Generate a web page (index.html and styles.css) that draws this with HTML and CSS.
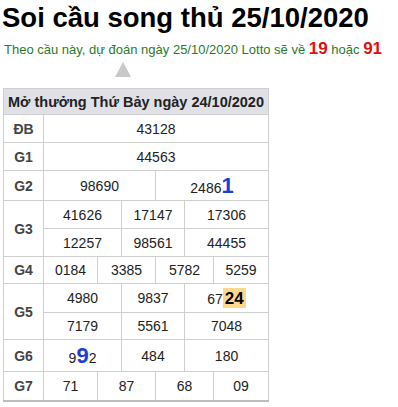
FILE: index.html
```html
<!DOCTYPE html>
<html lang="vi">
<head>
<meta charset="utf-8">
<link rel="stylesheet" href="styles.css">
</head>
<body>
<h1 class="title">Soi cầu song thủ 25/10/2020</h1>
<p class="sub">Theo cầu này, dự đoán ngày 25/10/2020 Lotto sẽ về <b class="hot">19</b> hoặc <b class="hot">91</b></p>
<div class="caret-row"><span class="caret"></span></div>
<table class="kq">
<colgroup>
<col class="c0"><col class="c1"><col class="c2"><col class="c3"><col class="c4"><col class="c5"><col class="c6">
</colgroup>
<tr class="h26"><th colspan="7" class="head">Mở thưởng Thứ Bảy ngày 24/10/2020</th></tr>
<tr class="h28"><td class="lbl">ĐB</td><td colspan="6">43128</td></tr>
<tr class="h28"><td class="lbl">G1</td><td colspan="6">44563</td></tr>
<tr class="h30"><td class="lbl">G2</td><td colspan="3">98690</td><td colspan="3">2486<b class="big">1</b></td></tr>
<tr class="h28"><td class="lbl" rowspan="2">G3</td><td colspan="2">41626</td><td colspan="2">17147</td><td colspan="2">17306</td></tr>
<tr class="h28"><td colspan="2">12257</td><td colspan="2">98561</td><td colspan="2">44455</td></tr>
<tr class="h27"><td class="lbl">G4</td><td>0184</td><td colspan="2">3385</td><td colspan="2">5782</td><td>5259</td></tr>
<tr class="h29"><td class="lbl" rowspan="2">G5</td><td colspan="2">4980</td><td colspan="2">9837</td><td colspan="2">67<b class="mark">24</b></td></tr>
<tr class="h27"><td colspan="2">7179</td><td colspan="2">5561</td><td colspan="2">7048</td></tr>
<tr class="h32"><td class="lbl">G6</td><td colspan="2">9<b class="big">9</b>2</td><td colspan="2">484</td><td colspan="2">180</td></tr>
<tr class="h29 last"><td class="lbl">G7</td><td>71</td><td colspan="2">87</td><td colspan="2">68</td><td>09</td></tr>
</table>
</body>
</html>
```
FILE: styles.css
```css
html, body { margin: 0; padding: 0; background: #fff; }
body { font-family: "Liberation Sans", Arial, sans-serif; color: #222; padding: 0 3px; }
.title { font-size: 27.5px; font-weight: bold; color: #000; margin: 0; padding-top: 3px; line-height: 30px; margin-left: -1px; }
.sub { margin: 0; padding-top: 7px; font-size: 13px; line-height: 18px; color: #2a7a2a; padding-left: 1px; }
.hot { color: #e01010; font-size: 17px; }
.caret-row { height: 29px; padding-left: 112px; padding-top: 3px; box-sizing: border-box; }
.caret { display: block; width: 0; height: 0; border-left: 8px solid transparent; border-right: 8px solid transparent; border-bottom: 15px solid #c8c8c8; }
.kq { border-collapse: collapse; table-layout: fixed; width: 265px; font-size: 14px; }
.kq td, .kq th { border: 1px solid #cfcfcf; text-align: center; padding: 0; }
.c0 { width: 40px; } .c1 { width: 54px; } .c2 { width: 24px; } .c3 { width: 34px; }
.c4 { width: 29px; } .c5 { width: 29px; } .c6 { width: 55px; }
.head { background: #dfe1e7; font-weight: bold; color: #222; font-size: 14.5px; white-space: nowrap; }
.lbl { font-weight: bold; color: #444; }
.h26 { height: 26px; } .h27 { height: 27px; } .h28 { height: 28px; } .h29 { height: 29px; }
.h30 { height: 30px; } .h32 { height: 32px; }
.last td { border-bottom: 2px solid #bdbdbd; }
.big { color: #1840d8; font-size: 22px; line-height: 1; }
.mark { background: #fcd88c; color: #000; font-size: 17px; padding: 0 2px; line-height: 1; display: inline-block; padding-top: 2px; padding-bottom: 1px; }
```
